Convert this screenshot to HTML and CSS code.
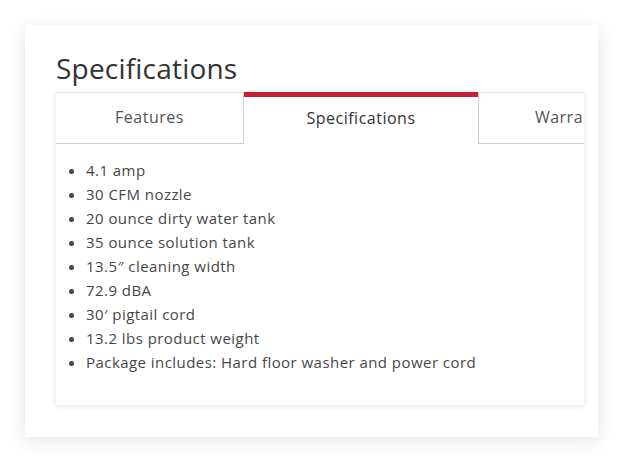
FILE: index.html
```html
<!DOCTYPE html>
<html lang="en">
<head>
<meta charset="utf-8">
<title>Specifications</title>
<link rel="stylesheet" href="styles.css">
</head>
<body>
<div class="card">
  <h2 class="title">Specifications</h2>
  <div class="panel">
    <div class="tabs">
      <div class="tab tab-features">Features</div>
      <div class="tab tab-specs active">Specifications</div>
      <div class="tab tab-warranty">Warranty</div>
    </div>
    <ul class="specs">
      <li>4.1 amp</li>
      <li>30 CFM nozzle</li>
      <li>20 ounce dirty water tank</li>
      <li>35 ounce solution tank</li>
      <li>13.5″ cleaning width</li>
      <li>72.9 dBA</li>
      <li>30′ pigtail cord</li>
      <li>13.2 lbs product weight</li>
      <li>Package includes: Hard floor washer and power cord</li>
    </ul>
  </div>
</div>
</body>
</html>
```

FILE: styles.css
```css
html, body {
  margin: 0;
  padding: 0;
  background: #ffffff;
}
body {
  padding: 25px 35px 35px 25px;
  font-family: "Open Sans", "DejaVu Sans", sans-serif;
  color: #333;
}
.card {
  width: 573px;
  height: 412px;
  box-sizing: border-box;
  background: #fff;
  box-shadow: 0 4px 18px rgba(0, 0, 0, 0.10);
  padding: 27px 14px 0 31px;
}
.title {
  margin: 0 0 8px 0;
  font-weight: 400;
  font-size: 28px;
  line-height: 32px;
  color: #333;
  letter-spacing: 0.2px;
}
.panel {
  width: 528px;
  height: 313px;
  box-sizing: border-box;
  background: #fff;
  box-shadow: 0 1px 5px rgba(0, 0, 0, 0.12);
  overflow: hidden;
}
.tabs {
  display: flex;
  height: 52px;
}
.tab {
  flex: 0 0 auto;
  box-sizing: border-box;
  height: 52px;
  display: flex;
  align-items: center;
  justify-content: center;
  font-size: 16px;
  letter-spacing: 0.5px;
  color: #555;
  border-top: 1px solid #e6e6e6;
  border-bottom: 1px solid #d0d0d0;
  background: #fff;
  padding-bottom: 3px;
  white-space: nowrap;
}
.tab-features {
  width: 188px;
  border-right: 1px solid #d0d0d0;
}
.tab-specs {
  width: 234px;
}
.tab-warranty {
  width: 186px;
  border-left: 1px solid #d0d0d0;
}
.tab.active {
  border-top: 5px solid #c41f33;
  border-bottom: 1px solid transparent;
  color: #333;
  padding-bottom: 5px;
}
.specs {
  margin: 14px 0 0 0;
  padding: 0 0 0 30px;
  list-style: disc;
  font-size: 15px;
  line-height: 24px;
  letter-spacing: 0.45px;
  color: #474747;
}
```
